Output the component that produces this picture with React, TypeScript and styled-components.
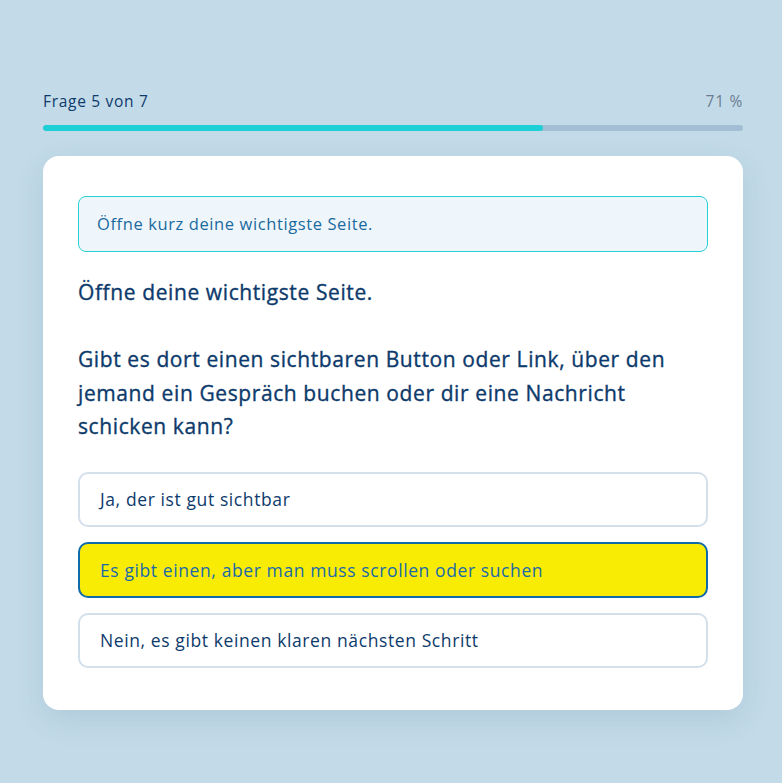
import styled, { createGlobalStyle } from "styled-components";

const GlobalStyle = createGlobalStyle`
  html, body {
    margin: 0;
    padding: 0;
    background: #c3dbe8;
  }
  body {
    font-family: "Open Sans", "Liberation Sans", sans-serif;
    color: #0d3a6b;
  }
`;

const Page = styled.div`
  min-height: 783px;
  padding: 91px 39px 40px 43px;
  box-sizing: border-box;
`;

const ProgressHead = styled.div`
  display: flex;
  justify-content: space-between;
  align-items: center;
  font-size: 15.5px;
  line-height: 20px;
  letter-spacing: 0.7px;
  margin-bottom: 14px;
`;

const StepLabel = styled.span`
  color: #0d3a6b;
`;

const Percent = styled.span`
  color: #6c7b92;
`;

const Track = styled.div`
  height: 6px;
  border-radius: 3px;
  background: #a2bed4;
  overflow: hidden;
`;

const Fill = styled.div`
  height: 100%;
  border-radius: 3px;
  background: #1dcfd6;
`;

const Card = styled.div`
  margin-top: 25px;
  background: #fff;
  border-radius: 16px;
  padding: 40px 35px 42px;
  box-shadow: 0 10px 30px rgba(40, 80, 120, 0.12);
`;

const Hint = styled.div`
  border: 1px solid #27d0d8;
  background: #eef6fb;
  border-radius: 8px;
  padding: 17px 18px;
  font-size: 16.5px;
  letter-spacing: 0.6px;
  color: #1a6a9e;
  line-height: 20px;
`;

// medium weight: Open Sans has no 500, so thicken the regular cut a little
const Question = styled.p`
  margin: 24px 0 28px;
  font-size: 21px;
  line-height: 33.5px;
  font-weight: 400;
  letter-spacing: 0.6px;
  -webkit-text-stroke: 0.35px #0d3a6b;
  color: #0d3a6b;
  white-space: pre-line;
`;

const Options = styled.div`
  display: flex;
  flex-direction: column;
  gap: 15px;
`;

const Option = styled.button<{ $selected?: boolean }>`
  display: block;
  width: 100%;
  text-align: left;
  font-family: inherit;
  font-size: 17.5px;
  letter-spacing: 0.6px;
  height: 55.5px;
  padding: 0 20px;
  border-radius: 10px;
  border: 2px solid ${(p) => (p.$selected ? "#0e6aa8" : "#d3e0ec")};
  background: ${(p) => (p.$selected ? "#f9ec04" : "#fff")};
  color: ${(p) => (p.$selected ? "#1a6aaa" : "#0d3a6b")};
  cursor: pointer;
`;

const options = [
  "Ja, der ist gut sichtbar",
  "Es gibt einen, aber man muss scrollen oder suchen",
  "Nein, es gibt keinen klaren nächsten Schritt",
];

export default function App() {
  const current = 5;
  const total = 7;
  const pct = Math.round((current / total) * 100);
  return (
    <>
      <GlobalStyle />
      <Page>
        <ProgressHead>
          <StepLabel>
            Frage {current} von {total}
          </StepLabel>
          <Percent>{pct} %</Percent>
        </ProgressHead>
        <Track>
          <Fill style={{ width: `${(current / total) * 100}%` }} />
        </Track>
        <Card>
          <Hint>Öffne kurz deine wichtigste Seite.</Hint>
          <Question>
            {"Öffne deine wichtigste Seite.\n\nGibt es dort einen sichtbaren Button oder Link, über den jemand ein Gespräch buchen oder dir eine Nachricht schicken kann?"}
          </Question>
          <Options>
            {options.map((o, i) => (
              <Option key={o} $selected={i === 1}>
                {o}
              </Option>
            ))}
          </Options>
        </Card>
      </Page>
    </>
  );
}
